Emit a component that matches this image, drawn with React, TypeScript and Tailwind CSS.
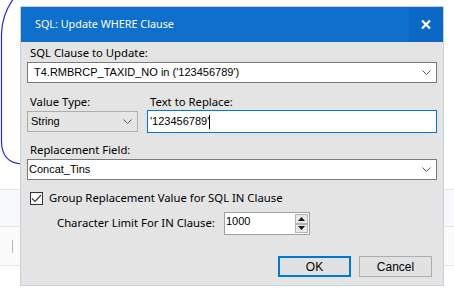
import React from "react";

const ui = { fontFamily: '"Noto Sans", "Open Sans", sans-serif' };
const ctl = { fontFamily: '"Liberation Sans", Arial, sans-serif' };

function Chevron() {
  return (
    <svg width="9" height="5" viewBox="0 0 9 5" className="shrink-0">
      <path d="M0.5 0.5 L4.5 4.5 L8.5 0.5" fill="none" stroke="#5a5a5a" strokeWidth="1" />
    </svg>
  );
}

function SpinArrow({ up }: { up?: boolean }) {
  return (
    <div className="flex-1 flex items-center justify-center bg-[#e8e8e8] border border-[#b5b5b5]">
      <svg width="7" height="4" viewBox="0 0 7 4">
        <path d={up ? "M0 4 L3.5 0 L7 4 Z" : "M0 0 L3.5 4 L7 0 Z"} fill="#1a1a1a" />
      </svg>
    </div>
  );
}

export default function App() {
  return (
    <div className="relative w-[454px] h-[290px] overflow-hidden bg-white">
      {/* Background page behind the dialog */}
      <div className="flex flex-col h-full">
        <div className="relative h-[189px]">
          <svg className="absolute left-0 top-0" width="24" height="170" viewBox="0 0 24 170">
            <path d="M14 -2 Q2 14 1.5 34 L1.5 142 Q2 163 22 164" fill="none" stroke="#2a2ad8" strokeWidth="1.2" />
          </svg>
        </div>
        <div className="h-[37px] border-t border-[#e4e8ee] bg-[#f8f9fb]" />
        <div className="h-[39px] border-t border-[#e4e8ee] bg-[#fbfbfc] pl-[12px] pt-[13px]">
          <div className="w-px h-[13px] bg-[#b8b8b8]" />
        </div>
        <div className="flex-1 border-t border-[#e4e8ee] bg-white" />
      </div>

      {/* Dialog */}
      <div
        className="absolute left-[20px] top-[6px] w-[424px] h-[280px] border border-[#c7d0dd] bg-[#e4e4e4] flex flex-col whitespace-nowrap"
        style={ui}
      >
        <div className="h-[35px] bg-[#0e6fcd] flex items-center">
          <span className="pl-[14px] text-[10.8px] text-white">SQL: Update WHERE Clause</span>
          <div className="ml-auto w-[34px] h-full bg-[#0b68c4] flex items-center justify-center">
            <svg width="10" height="9" viewBox="0 0 10 9">
              <path d="M1 0.5 L9 8.5 M9 0.5 L1 8.5" stroke="white" strokeWidth="2.2" />
            </svg>
          </div>
        </div>

        <div className="flex flex-col px-[6px] text-[11.3px] text-black">
          <div className="pl-[3px] mt-[3px] h-[16px] leading-[16px]">SQL Clause to Update:</div>
          <div className="mt-[1px] h-[21px] bg-white border border-[#7a7a7a] flex items-center pl-[6px] pr-[5px]" style={ctl}>
            <span className="text-[11px] flex-1">T4.RMBRCP_TAXID_NO in ('123456789')</span>
            <Chevron />
          </div>

          <div className="mt-[11px] flex">
            <div className="w-[111px] flex flex-col">
              <div className="pl-[3px] h-[16px] leading-[16px]">Value Type:</div>
              <div className="mt-[1px] h-[21px] bg-[#e5e5e5] border border-[#adadad] flex items-center pl-[3px] pr-[5px]" style={ctl}>
                <span className="text-[11px] flex-1">String</span>
                <Chevron />
              </div>
            </div>
            <div className="ml-[9px] flex-1 flex flex-col">
              <div className="pl-[3px] h-[16px] leading-[16px]">Text to Replace:</div>
              <div className="h-[23px] bg-white border border-[#0078d7] flex items-center pl-[2px]" style={ctl}>
                <span className="text-[11px]">'123456789'</span>
                <span className="w-px h-[14px] bg-black" />
              </div>
            </div>
          </div>

          <div className="pl-[3px] mt-[9px] h-[16px] leading-[16px]">Replacement Field:</div>
          <div className="mt-[1px] h-[21px] bg-white border border-[#7a7a7a] flex items-center pl-[1px] pr-[5px]" style={ctl}>
            <span className="text-[11px] flex-1">Concat_Tins</span>
            <Chevron />
          </div>

          <div className="mt-[11px] flex items-center pl-[3px] h-[14px]">
            <div className="w-[13px] h-[13px] border border-[#333333] bg-white flex items-center justify-center">
              <svg width="11" height="9" viewBox="0 0 11 9">
                <path d="M1 4.5 L4 7.5 L10 1" fill="none" stroke="#3c3c3c" strokeWidth="1.2" />
              </svg>
            </div>
            <span className="ml-[6px]">Group Replacement Value for SQL IN Clause</span>
          </div>

          <div className="mt-[7px] flex items-center h-[23px]">
            <span className="pl-[30px] w-[197px]">Character Limit For IN Clause:</span>
            <div className="w-[86px] h-[23px] bg-white border border-[#a0a0a0] flex pl-[1px]" style={ctl}>
              <span className="text-[11px] flex-1 leading-[17px]">1000</span>
              <div className="w-[15px] flex flex-col p-[1px]">
                <SpinArrow up />
                <SpinArrow />
              </div>
            </div>
          </div>

          <div className="mt-[21px] flex justify-end gap-[8px] pr-[5px]" style={ctl}>
            <div className="w-[73px] h-[21px] border-2 border-[#0078d7] bg-[#e1e1e1] flex items-center justify-center text-[12px]">
              OK
            </div>
            <div className="w-[73px] h-[21px] border border-[#adadad] bg-[#e1e1e1] flex items-center justify-center text-[12px]">
              Cancel
            </div>
          </div>
        </div>
      </div>
    </div>
  );
}
